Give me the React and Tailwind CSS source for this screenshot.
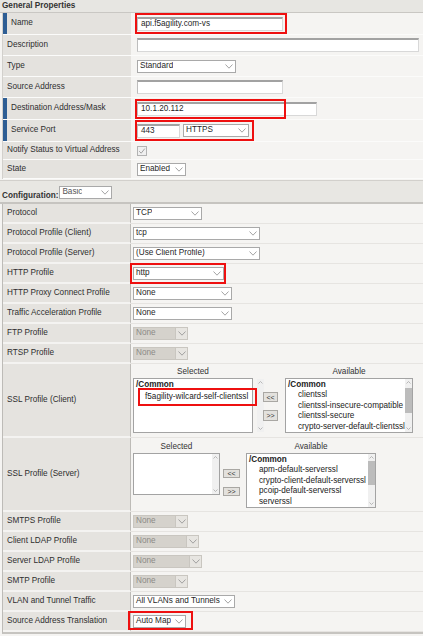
function Chevron() {
  return (
    <svg width="8" height="5" viewBox="0 0 8 5" className="shrink-0">
      <path d="M0.5 0.5 L4 4.2 L7.5 0.5" fill="none" stroke="#9a9a9a" strokeWidth="0.9" />
    </svg>
  )
}

function Select({ value, className = '', disabled = false }) {
  return (
    <span
      className={`flex h-[13px] shrink-0 items-center justify-between border ${
        disabled ? 'border-[#c9c6c0] bg-[#d5d2cc] text-[#8c8a86]' : 'border-[#a9a9a9] bg-white text-[#1f1f1f]'
      } ${className}`}
    >
      <span className="overflow-hidden whitespace-nowrap pl-[2px] leading-none">{value}</span>
      <span
        className={`flex h-full w-[12px] shrink-0 items-center justify-center ${
          disabled ? 'border-l border-[#c9c6c0] bg-[#e7e5e1]' : ''
        }`}
      >
        <Chevron />
      </span>
    </span>
  )
}

function TextInput({ value = '', className = '' }) {
  return (
    <span
      className={`flex h-[14px] shrink-0 items-center border border-t-2 border-[#d8d8d8] border-t-[#a2a2a2] border-l-[#bdbdbd] bg-white pl-[3px] leading-none text-[#1f1f1f] ${className}`}
    >
      {value}
    </span>
  )
}

// red callout frame drawn over a field
function Callout({ frame, children }) {
  return (
    <span className="relative flex">
      {children}
      <span className={`pointer-events-none absolute z-10 border-2 border-[#ee1010] ${frame}`} />
    </span>
  )
}

function GeneralRow({ label, required = false, height, children }) {
  return (
    <div className={`flex ${height} border-b border-[#fbfbfa]`}>
      <div
        className={`flex w-[128px] shrink-0 items-center bg-[#e4e2de] pl-[4px] ${
          required ? 'border-l-4 border-[#2e5e94]' : ''
        }`}
      >
        {label}
      </div>
      <div className="ml-[2px] flex flex-1 items-center bg-[#f5f4f2] pl-[4px]">{children}</div>
    </div>
  )
}

function ConfigRow({ label, height = 'h-[20px]', children, top = false }) {
  return (
    <div className={`flex ${height}`}>
      <div className="flex w-[128px] shrink-0 items-center border-r border-b-2 border-r-[#bdbbb7] border-b-[#f4f3f1] bg-[#e5e3df] pl-[4px]">
        {label}
      </div>
      <div
        className={`flex flex-1 border-b border-[#e6e4e1] bg-[#f5f4f2] pl-[2px] ${top ? 'items-start' : 'items-center'}`}
      >
        {children}
      </div>
    </div>
  )
}

function ScrollTrack({ thumb = '' }) {
  return (
    <div className="flex w-[7px] shrink-0 flex-col bg-[#f0f0f0]">
      <svg width="7" height="7" viewBox="0 0 7 7">
        <path d="M1.5 4.5 L3.5 2.5 L5.5 4.5" fill="none" stroke="#a8a8a8" strokeWidth="0.8" />
      </svg>
      <div className="flex-1">{thumb && <div className={`bg-[#bcbcbc] ${thumb}`} />}</div>
      <svg width="7" height="7" viewBox="0 0 7 7">
        <path d="M1.5 2.5 L3.5 4.5 L5.5 2.5" fill="none" stroke="#a8a8a8" strokeWidth="0.8" />
      </svg>
    </div>
  )
}

function MoveButton({ label, className = '' }) {
  return (
    <span
      className={`flex items-center justify-center border border-[#a9a7a3] bg-[#e3e1dd] text-[7px] leading-none text-[#333] ${className}`}
    >
      {label}
    </span>
  )
}

function ProfileList({ items, className = '', thumb }) {
  return (
    <div className={`flex border border-[#a3a3a3] bg-white ${className}`}>
      <div className="flex-1 overflow-hidden whitespace-nowrap pl-[2px] pt-[1px] leading-[10.4px] text-[#222]">
        <div className="font-bold">/Common</div>
        {items.map((item) => (
          <div key={item} className="pl-[10px]">
            {item}
          </div>
        ))}
      </div>
      <ScrollTrack thumb={thumb} />
    </div>
  )
}

export default function App() {
  return (
    <div className="h-[636px] w-[423px] overflow-hidden bg-[#f5f4f2] font-['Liberation_Sans',Arial,sans-serif] text-[8.2px] text-[#2e2e2e]">
      <div className="flex h-[13px] items-center border-b border-[#c9c7c3] bg-[#e7e6e2] pl-[2px] font-bold text-[#333]">
        General Properties
      </div>

      <div className="ml-[2px] border-l border-[#d2d0cc]">
        <GeneralRow label="Name" required height="h-[22px]">
          <Callout frame="-left-[2px] -top-[4px] h-[21px] w-[152px]">
            <TextInput value="api.f5agility.com-vs" className="w-[146px]" />
          </Callout>
        </GeneralRow>
        <GeneralRow label="Description" height="h-[21px]">
          <TextInput className="w-[282px]" />
        </GeneralRow>
        <GeneralRow label="Type" height="h-[21px]">
          <Select value="Standard" className="w-[99px]" />
        </GeneralRow>
        <GeneralRow label="Source Address" height="h-[21px]">
          <TextInput className="w-[146px]" />
        </GeneralRow>
        <GeneralRow label="Destination Address/Mask" required height="h-[22px]">
          <Callout frame="-left-[2px] -top-[3px] h-[20px] w-[151px]">
            <TextInput value="10.1.20.112" className="w-[180px]" />
          </Callout>
        </GeneralRow>
        <GeneralRow label="Service Port" required height="h-[22px]">
          <Callout frame="-left-[2px] -top-[4px] h-[21px] w-[119px]">
            <span className="flex items-center gap-[3px]">
              <TextInput value="443" className="w-[43px]" />
              <Select value="HTTPS" className="w-[66px]" />
            </span>
          </Callout>
        </GeneralRow>
        <GeneralRow label="Notify Status to Virtual Address" height="h-[18px]">
          <span className="flex h-[10px] w-[10px] items-center justify-center border border-[#b3b3b3] bg-[#f0f0f0]">
            <svg width="8" height="8" viewBox="0 0 8 8">
              <path d="M1.2 4.2 L3.2 6.2 L6.8 1.6" fill="none" stroke="#9a9a9a" strokeWidth="0.9" />
            </svg>
          </span>
        </GeneralRow>
        <GeneralRow label="State" height="h-[19px]">
          <Select value="Enabled" className="w-[49px]" />
        </GeneralRow>
      </div>

      <div className="mt-[1px] flex h-[24px] items-end gap-[1px] border-t border-b-2 border-t-[#d2d0cc] border-b-[#c6c4c0] bg-[#e8e7e3] pb-[2px] pl-[2px]">
        <span className="font-bold leading-none text-[#333]">Configuration:</span>
        <Select value="Basic" className="mb-[1px] w-[53px] text-[#555]" />
      </div>

      <div className="ml-[2px] border-l border-b-2 border-l-[#bdbbb7] border-b-[#c6c4c0]">
        <ConfigRow label="Protocol">
          <Select value="TCP" className="w-[69px]" />
        </ConfigRow>
        <ConfigRow label="Protocol Profile (Client)">
          <Select value="tcp" className="w-[127px]" />
        </ConfigRow>
        <ConfigRow label="Protocol Profile (Server)">
          <Select value="(Use Client Profile)" className="w-[127px]" />
        </ConfigRow>
        <ConfigRow label="HTTP Profile">
          <Callout frame="-left-[3px] -top-[4px] h-[21px] w-[96px]">
            <Select value="http" className="w-[91px]" />
          </Callout>
        </ConfigRow>
        <ConfigRow label="HTTP Proxy Connect Profile">
          <Select value="None" className="w-[99px]" />
        </ConfigRow>
        <ConfigRow label="Traffic Acceleration Profile">
          <Select value="None" className="w-[99px]" />
        </ConfigRow>
        <ConfigRow label="FTP Profile">
          <Select value="None" disabled className="w-[55px]" />
        </ConfigRow>
        <ConfigRow label="RTSP Profile">
          <Select value="None" disabled className="w-[55px]" />
        </ConfigRow>

        <ConfigRow label="SSL Profile (Client)" height="h-[74px]" top>
          <div className="flex pt-[3px]">
            <div className="w-[120px]">
              <div className="h-[11px] text-center leading-[10px] text-[#333]">Selected</div>
              <div className="flex h-[55px] border border-[#a3a3a3] bg-white">
                <div className="relative z-10 flex-1 pt-[1px] text-[#222]">
                  <div className="h-[8px] overflow-hidden pl-[2px] font-bold leading-[10px]">/Common</div>
                  <div className="ml-[4px] flex h-[18px] w-[119px] items-center whitespace-nowrap border-2 border-[#ee1010] pl-[5px]">
                    f5agility-wilcard-self-clientssl
                  </div>
                </div>
                <ScrollTrack />
              </div>
            </div>
            <div className="ml-[10px] flex flex-col gap-[8px] pt-[25px]">
              <MoveButton label="<<" className="h-[10px] w-[15px]" />
              <MoveButton label=">>" className="h-[11px] w-[15px]" />
            </div>
            <div className="ml-[7px] w-[128px]">
              <div className="h-[11px] text-center leading-[10px] text-[#333]">Available</div>
              <ProfileList
                className="h-[55px]"
                thumb="mt-[2px] h-[25px]"
                items={['clientssl', 'clientssl-insecure-compatible', 'clientssl-secure', 'crypto-server-default-clientssl']}
              />
            </div>
          </div>
        </ConfigRow>

        <ConfigRow label="SSL Profile (Server)" height="h-[74px]" top>
          <div className="flex pt-[4px]">
            <div className="w-[87px]">
              <div className="h-[11px] text-center leading-[10px] text-[#333]">Selected</div>
              <div className="flex h-[42px] border border-[#a3a3a3] bg-white">
                <div className="flex-1" />
                <ScrollTrack />
              </div>
            </div>
            <div className="ml-[3px] flex flex-col gap-[9px] pt-[27px]">
              <MoveButton label="<<" className="h-[9px] w-[17px]" />
              <MoveButton label=">>" className="h-[9px] w-[17px]" />
            </div>
            <div className="ml-[6px] w-[130px]">
              <div className="h-[11px] text-center leading-[10px] text-[#333]">Available</div>
              <ProfileList
                className="h-[55px]"
                thumb="h-[24px]"
                items={['apm-default-serverssl', 'crypto-client-default-serverssl', 'pcoip-default-serverssl', 'serverssl']}
              />
            </div>
          </div>
        </ConfigRow>

        <ConfigRow label="SMTPS Profile">
          <Select value="None" disabled className="w-[55px]" />
        </ConfigRow>
        <ConfigRow label="Client LDAP Profile">
          <Select value="None" disabled className="w-[66px]" />
        </ConfigRow>
        <ConfigRow label="Server LDAP Profile">
          <Select value="None" disabled className="w-[69px]" />
        </ConfigRow>
        <ConfigRow label="SMTP Profile">
          <Select value="None" disabled className="w-[55px]" />
        </ConfigRow>
        <ConfigRow label="VLAN and Tunnel Traffic">
          <Select value="All VLANs and Tunnels" className="w-[102px]" />
        </ConfigRow>
        <ConfigRow label="Source Address Translation">
          <Callout frame="-left-[5px] -top-[4px] h-[19px] w-[65px]">
            <Select value="Auto Map" className="w-[53px]" />
          </Callout>
        </ConfigRow>
      </div>
    </div>
  )
}
